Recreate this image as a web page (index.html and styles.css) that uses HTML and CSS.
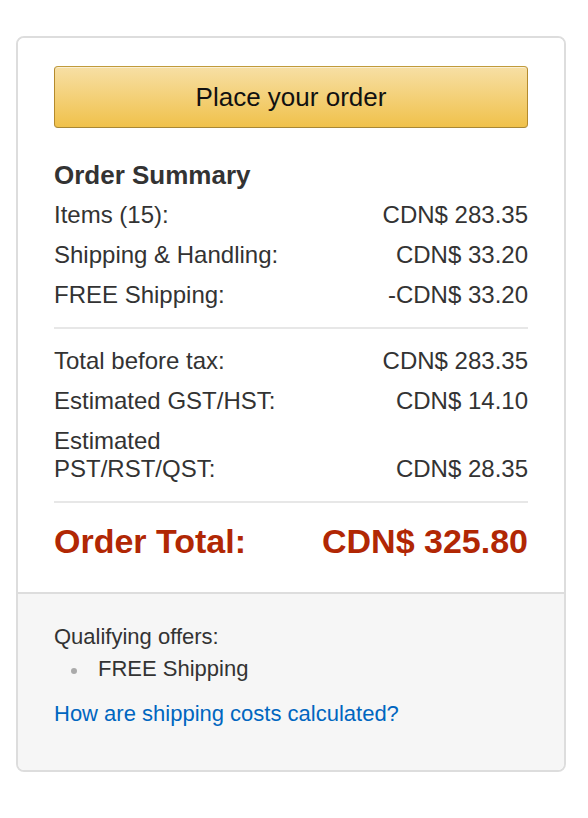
FILE: index.html
```html
<!DOCTYPE html>
<html>
<head>
<meta charset="utf-8">
<link rel="stylesheet" href="styles.css">
</head>
<body>
<div class="card">
  <div class="main">
    <button class="place-btn">Place your order</button>
    <h3 class="summary-title">Order Summary</h3>
    <div class="rows">
      <div class="row"><span>Items (15):</span><span>CDN$ 283.35</span></div>
      <div class="row"><span>Shipping &amp; Handling:</span><span>CDN$ 33.20</span></div>
      <div class="row"><span>FREE Shipping:</span><span>-CDN$ 33.20</span></div>
    </div>
    <hr class="divider">
    <div class="rows">
      <div class="row"><span>Total before tax:</span><span>CDN$ 283.35</span></div>
      <div class="row"><span>Estimated GST/HST:</span><span>CDN$ 14.10</span></div>
      <div class="row"><span class="label-wrap">Estimated<br>PST/RST/QST:</span><span>CDN$ 28.35</span></div>
    </div>
    <hr class="divider">
    <div class="total-row"><span>Order Total:</span><span>CDN$ 325.80</span></div>
  </div>
  <div class="offers">
    <div class="offers-title">Qualifying offers:</div>
    <ul class="offers-list">
      <li>FREE Shipping</li>
    </ul>
    <a class="link" href="#">How are shipping costs calculated?</a>
  </div>
</div>
</body>
</html>
```

FILE: styles.css
```css
* { box-sizing: border-box; }
html, body { margin: 0; padding: 0; background: #fff; }
body {
  font-family: "Liberation Sans", Arial, sans-serif;
  color: #333;
  font-size: 24px;
  padding: 36px 0 0 16px;
}
.card {
  width: 550px;
  height: 736px;
  border: 2px solid #ddd;
  border-radius: 8px;
  overflow: hidden;
  display: flex;
  flex-direction: column;
}
.main {
  padding: 28px 36px 31px 36px;
  border-bottom: 2px solid #ddd;
  background: #fff;
}
.place-btn {
  display: block;
  width: 474px;
  height: 62px;
  border: 1px solid #a88734;
  border-color: #c09b3b #b48a2c #a88734;
  border-radius: 4px;
  background: linear-gradient(to bottom, #f7dfa5, #f0c14b);
  box-shadow: inset 0 1px 0 rgba(255,255,255,0.5);
  font-family: "Liberation Sans", Arial, sans-serif;
  font-size: 26px;
  color: #111;
  padding: 0;
  cursor: pointer;
}
.summary-title {
  margin: 31px 0 10px;
  font-size: 26px;
  line-height: 32px;
  font-weight: bold;
  color: #333;
}
.rows {
  display: flex;
  flex-direction: column;
  gap: 12px;
}
.row {
  display: flex;
  justify-content: space-between;
  align-items: flex-end;
  line-height: 28px;
}
.divider {
  border: 0;
  border-top: 2px solid #e7e7e7;
  margin: 18px 0 18px;
  height: 0;
}
.total-row {
  display: flex;
  justify-content: space-between;
  align-items: center;
  font-size: 34px;
  line-height: 40px;
  font-weight: bold;
  color: #b12704;
}
.offers {
  flex: 1;
  background: #f6f6f6;
  padding: 29px 36px 0 36px;
  font-size: 22px;
}
.offers-title { line-height: 28px; }
.offers-list {
  margin: 4px 0 0;
  padding: 0;
  list-style: none;
}
.offers-list li {
  position: relative;
  padding-left: 44px;
  line-height: 28px;
}
.offers-list li::before {
  content: "";
  position: absolute;
  left: 17px;
  top: 13px;
  width: 6px;
  height: 6px;
  border-radius: 50%;
  background: #aaa;
}
.link {
  display: block;
  margin-top: 17px;
  line-height: 28px;
  color: #0066c0;
  text-decoration: none;
}
```
